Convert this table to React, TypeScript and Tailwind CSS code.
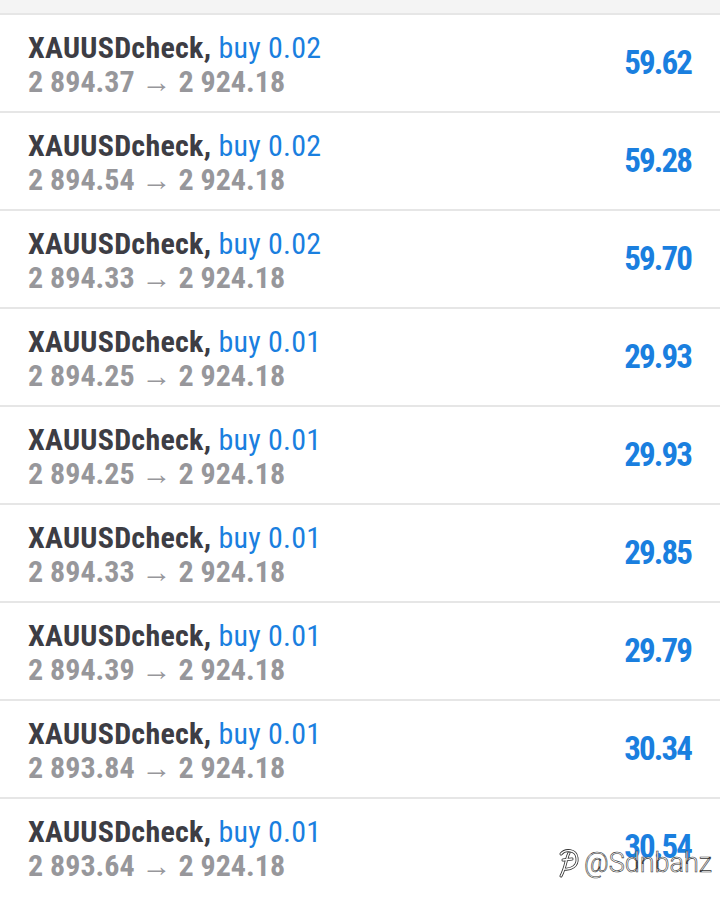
import React from "react";

const rows = [
  { lot: "0.02", open: "2 894.37", close: "2 924.18", profit: "59.62" },
  { lot: "0.02", open: "2 894.54", close: "2 924.18", profit: "59.28" },
  { lot: "0.02", open: "2 894.33", close: "2 924.18", profit: "59.70" },
  { lot: "0.01", open: "2 894.25", close: "2 924.18", profit: "29.93" },
  { lot: "0.01", open: "2 894.25", close: "2 924.18", profit: "29.93" },
  { lot: "0.01", open: "2 894.33", close: "2 924.18", profit: "29.85" },
  { lot: "0.01", open: "2 894.39", close: "2 924.18", profit: "29.79" },
  { lot: "0.01", open: "2 893.84", close: "2 924.18", profit: "30.34" },
  { lot: "0.01", open: "2 893.64", close: "2 924.18", profit: "30.54" },
];

export default function App() {
  return (
    <div
      className="relative w-[720px] h-[905px] bg-white overflow-hidden"
      style={{ fontFamily: "'Roboto Condensed', Roboto, 'Liberation Sans', sans-serif" }}
    >
      <div className="h-[13px] bg-[#f4f4f4]" />
      {rows.map((r, i) => (
        <div
          key={i}
          className="h-[98px] border-t-2 border-[#e6e6e6] flex items-center justify-between pl-[28px] pr-[29px]"
        >
          <div className="flex flex-col pt-[3px]">
            <div className="text-[30px] leading-[34px] tracking-[0.25px] whitespace-nowrap">
              <span className="font-bold text-[#3d3d44]">XAUUSDcheck,</span>{" "}
              <span className="text-[#1a7fdf]">buy {r.lot}</span>
            </div>
            <div className="text-[30px] leading-[34px] font-bold text-[#97979b] whitespace-nowrap">
              {r.open} <span className="font-normal">→</span> {r.close}
            </div>
          </div>
          <div className="text-[33px] font-bold text-[#1a7fdf] tracking-[-1.9px]">{r.profit}</div>
        </div>
      ))}
      <div className="absolute left-[556px] top-[846px] flex items-center gap-[4px]">
        <svg width="24" height="34" viewBox="0 0 24 34">
          <g fill="none" strokeLinecap="round" strokeLinejoin="round">
            <path
              d="M5 8 C9 3, 20 3, 21 12 C22 20, 15 24, 8 23 M13 7 C10 12, 10 21, 5 30 M7 14 L16 13"
              stroke="#333"
              strokeWidth="3"
            />
            <path
              d="M5 8 C9 3, 20 3, 21 12 C22 20, 15 24, 8 23 M13 7 C10 12, 10 21, 5 30 M7 14 L16 13"
              stroke="#fff"
              strokeWidth="1.4"
            />
          </g>
        </svg>
        <span
          className="text-[27px] leading-[32px] text-white font-light"
          style={{ WebkitTextStroke: "0.6px #333", fontFamily: "Roboto, 'Liberation Sans', sans-serif" }}
        >
          @Sdnbahz
        </span>
      </div>
    </div>
  );
}
